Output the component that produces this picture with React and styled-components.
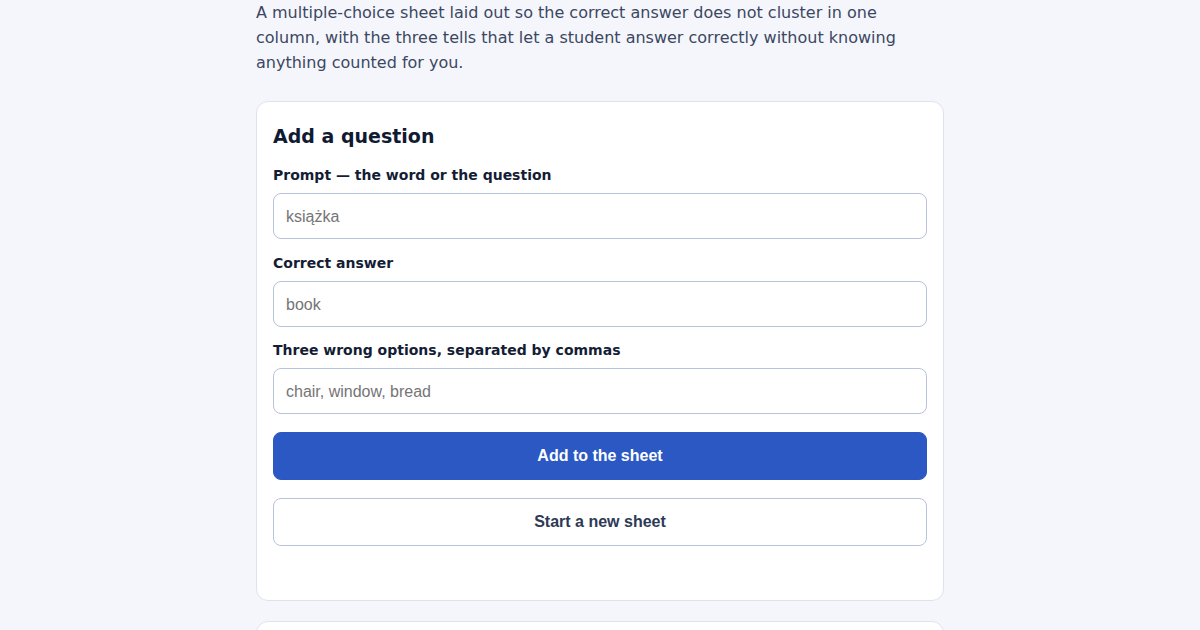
import React from "react";
import styled, { createGlobalStyle } from "styled-components";

const Global = createGlobalStyle`
  html, body { margin: 0; padding: 0; background: #f4f6fb; }
  body { font-family: "DejaVu Sans", sans-serif; }
  * { box-sizing: border-box; }
`;

const Page = styled.main`
  width: 688px;
  margin: 0 auto;
`;

const Intro = styled.p`
  margin: 0 0 26px;
  font-size: 16px;
  line-height: 25px;
  color: #3b4762;
`;

const Card = styled.section`
  background: #ffffff;
  border: 1px solid #dde3ee;
  border-radius: 12px;
  padding: ${(p) => p.$pad || "21px 16px 54px"};
  margin-bottom: 20px;
  min-height: ${(p) => p.$minH || "auto"};
`;

const Title = styled.h2`
  margin: 0 0 16px;
  font-size: 19px;
  line-height: 26px;
  font-weight: 700;
  color: #111a33;
`;

const Field = styled.div`
  display: flex;
  flex-direction: column;
  margin-bottom: ${(p) => p.$gap || "14px"};
`;

const Label = styled.label`
  font-size: 14px;
  line-height: 20px;
  font-weight: 700;
  color: #141d35;
  margin-bottom: 8px;
`;

const Input = styled.input`
  height: 46px;
  width: 100%;
  padding: 1px 12px 0;
  border: 1px solid #b9c3d9;
  border-radius: 8px;
  background: #fff;
  font-family: "Liberation Sans", Arial, sans-serif;
  font-size: 16px;
  color: #141d35;
  outline: none;
  &::placeholder { color: #757575; }
`;

const Button = styled.button`
  display: block;
  width: 100%;
  height: 48px;
  border-radius: 8px;
  font-family: "Liberation Sans", Arial, sans-serif;
  font-size: 16px;
  font-weight: 700;
  cursor: pointer;
  background: ${(p) => (p.$primary ? "#2b58c3" : "#ffffff")};
  color: ${(p) => (p.$primary ? "#ffffff" : "#2e3a55")};
  border: 1px solid ${(p) => (p.$primary ? "#2b58c3" : "#b9c3d9")};
  & + & { margin-top: 18px; }
`;

export default function App() {
  return (
    <>
      <Global />
      <Page>
        <Intro>
          A multiple-choice sheet laid out so the correct answer does not cluster in one
          column, with the three tells that let a student answer correctly without knowing
          anything counted for you.
        </Intro>
        <Card>
          <Title>Add a question</Title>
          <Field>
            <Label htmlFor="prompt">Prompt — the word or the question</Label>
            <Input id="prompt" placeholder="książka" />
          </Field>
          <Field $gap="13px">
            <Label htmlFor="correct">Correct answer</Label>
            <Input id="correct" placeholder="book" />
          </Field>
          <Field $gap="18px">
            <Label htmlFor="wrong">Three wrong options, separated by commas</Label>
            <Input id="wrong" placeholder="chair, window, bread" />
          </Field>
          <Button $primary>Add to the sheet</Button>
          <Button>Start a new sheet</Button>
        </Card>
        <Card $pad="16px" $minH="120px" />
      </Page>
    </>
  );
}
